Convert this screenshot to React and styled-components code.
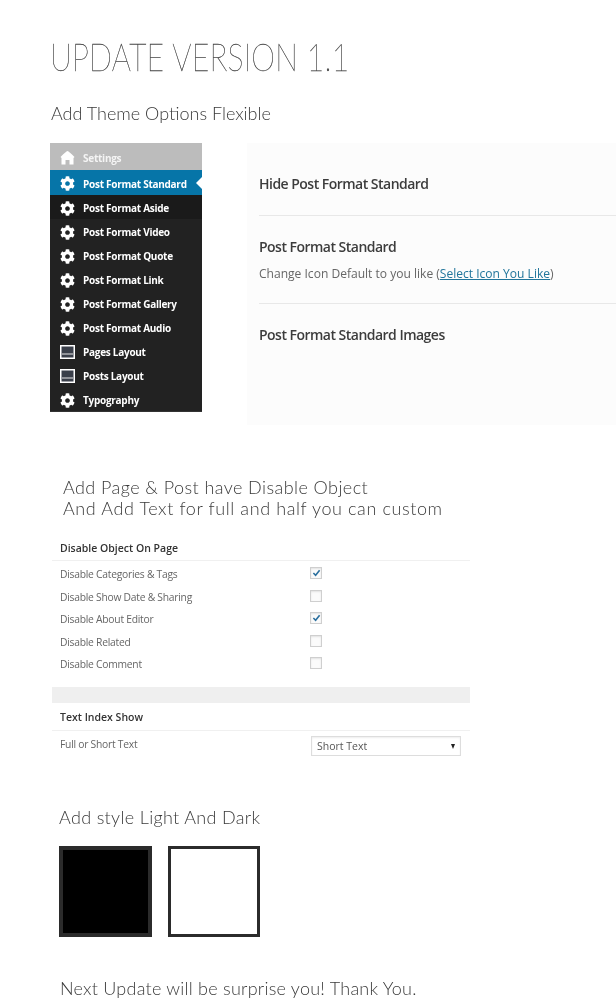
import React from "react";
import styled, { createGlobalStyle } from "styled-components";
import { FaCog } from "react-icons/fa";

const Global = createGlobalStyle`
  html, body { margin: 0; padding: 0; background: #fff; }
  body { width: 616px; overflow-x: hidden; }
`;

const Page = styled.div`
  width: 616px;
  height: 1000px;
  overflow: hidden;
  display: flex;
  flex-direction: column;
  font-family: "Open Sans", sans-serif;
`;

const Title = styled.h1`
  margin: 37px 0 0 50px;
  font: 100 37px/40px Lato, sans-serif;
  color: #444;
  letter-spacing: 0.3px;
  height: 40px;
  white-space: nowrap;
  -webkit-text-stroke: 0.3px #444;
  transform: scaleX(0.815);
  transform-origin: left center;
  filter: grayscale(1);
`;

const Lead = styled.p`
  margin: ${(p) => p.$top}px 0 0 ${(p) => p.$left}px;
  font: 300 18px/21px Lato, sans-serif;
  letter-spacing: ${(p) => p.$spacing ?? 0}px;
  color: #3a3a3a;
  white-space: nowrap;
  filter: grayscale(1);
`;

const TopRow = styled.section`
  display: flex;
  align-items: flex-start;
  gap: 45px;
  margin: 19px 0 0 50px;
`;

const Menu = styled.nav`
  width: 152px;
  height: 269px;
  background: #222;
  border-bottom: 1px solid #333;
  box-sizing: border-box;
  display: flex;
  flex-direction: column;
  flex: none;
  filter: blur(0.25px);
`;

const MenuHead = styled.div`
  height: 28px;
  background: #bcbcbc;
  display: flex;
  align-items: center;
  color: #f4f4f4;
  font-size: 10px;
  font-weight: 700;
  letter-spacing: -0.25px;
  padding-top: 2px;
  box-sizing: border-box;
`;

const MenuItem = styled.div`
  position: relative;
  height: ${(p) => (p.$active ? 25 : 24)}px;
  flex: none;
  display: flex;
  align-items: center;
  box-sizing: border-box;
  padding-top: 2px;
  color: #fff;
  font-size: 10px;
  font-weight: 700;
  letter-spacing: -0.27px;
  background: ${(p) => (p.$active ? "#0675a8" : p.$dim ? "#1a1a1a" : "transparent")};
  ${(p) =>
    p.$active &&
    `&::after {
      content: "";
      position: absolute;
      right: 0;
      top: 7px;
      border: 6px solid transparent;
      border-left: 0;
      border-right-color: #fff;
    }`}
`;

const IconSlot = styled.span`
  width: 33px;
  flex: none;
  display: flex;
  justify-content: center;
  padding-left: 1px;
  box-sizing: border-box;
  color: #fff;
  font-size: 15px;
`;

const Panel = styled.div`
  flex: 1;
  height: 282px;
  background: #fcfcfc;
  padding: 32px 0 0 12px;
  box-sizing: border-box;
  color: #444;
  filter: blur(0.3px);
`;

const PanelBlock = styled.div`
  border-bottom: ${(p) => (p.$last ? "0" : "1px solid #e8e8e8")};
  height: ${(p) => p.$height}px;
  box-sizing: border-box;
  padding-top: ${(p) => p.$pad}px;
`;

const PanelTitle = styled.div`
  font-size: 14px;
  line-height: 18px;
  font-weight: 600;
  letter-spacing: -0.52px;
  color: #3c3c3c;
`;

const PanelNote = styled.div`
  font-size: 12.05px;
  line-height: 17px;
  margin-top: 9px;
  color: #666;
  a { color: #21759b; text-decoration: underline; }
`;

const Options = styled.section`
  width: 418px;
  margin: 10px 0 0 52px;
  color: #555;
  filter: blur(0.25px);
`;

const OptionHead = styled.div`
  height: ${(p) => p.$height}px;
  border-bottom: 1px solid #f0f0f0;
  box-sizing: border-box;
  display: flex;
  align-items: center;
  padding: ${(p) => p.$pad ?? 0}px 0 0 8px;
  font-size: 10.5px;
  font-weight: 600;
  color: #333;
`;

const OptionList = styled.div`
  padding-top: 1px;
  height: 126px;
  box-sizing: border-box;
`;

const OptionRow = styled.div`
  height: 22.5px;
  display: flex;
  align-items: center;
  padding-left: 8px;
  font-size: 10.3px;
  letter-spacing: -0.25px;
  color: #666;
`;

const OptionLabel = styled.span`
  width: 250px;
  flex: none;
  position: relative;
  top: 1px;
`;

const Check = styled.span`
  width: 12px;
  height: 12px;
  box-sizing: border-box;
  border: 1px solid #cfcfcf;
  background: #fbfbfb;
  box-shadow: inset 0 1px 2px rgba(0, 0, 0, 0.1);
  display: flex;
  align-items: center;
  justify-content: center;
`;

const Band = styled.div`
  height: 16px;
  background: #efefef;
`;

const SelectRow = styled.div`
  display: flex;
  padding: 5px 9px 0 8px;
  justify-content: space-between;
  font-size: 10.3px;
  letter-spacing: -0.25px;
  color: #666;
`;

const SelectLabel = styled.span`
  padding-top: 1px;
`;

const SelectBox = styled.div`
  width: 150px;
  height: 20px;
  box-sizing: border-box;
  border: 1px solid #ddd;
  box-shadow: inset 0 1px 2px rgba(0, 0, 0, 0.07);
  display: flex;
  align-items: center;
  justify-content: space-between;
  padding: 0 5px;
  font-size: 10.5px;
  letter-spacing: 0;
  color: #555;
`;

const Caret = styled.span`
  width: 0;
  height: 0;
  border-left: 2.5px solid transparent;
  border-right: 2.5px solid transparent;
  border-top: 5px solid #222;
`;

const Swatches = styled.div`
  display: flex;
  gap: 16px;
  margin: 18px 0 0 59px;
`;

const Swatch = styled.div`
  width: ${(p) => p.$w}px;
  height: 91px;
  box-sizing: border-box;
  border: ${(p) => p.$border}px solid #2b2b2b;
  background: ${(p) => p.$bg};
`;

const Gear = () => (
  <IconSlot>
    <FaCog />
  </IconSlot>
);

const Home = () => (
  <IconSlot>
    <svg width="15" height="15" viewBox="0 0 15 15">
      <path d="M7.5 1 Q9 1.5 14.5 7 L13.5 8 V14.5 H9.5 V10 H5.5 V14.5 H1.5 V8 L0.5 7 Q6 1.5 7.5 1 Z" fill="#fff" />
    </svg>
  </IconSlot>
);

const LayoutIcon = () => (
  <IconSlot>
    <svg width="15" height="14" viewBox="0 0 15 14">
      <rect x="0.75" y="0.75" width="13.5" height="12.5" fill="#3a3f4a" stroke="#fff" strokeWidth="1.5" />
      <rect x="2" y="8.5" width="11" height="1" fill="#e8e8e8" />
    </svg>
  </IconSlot>
);

const Tick = () => (
  <svg width="9" height="8" viewBox="0 0 10 9">
    <path d="M1.5 4.5 L4 7 L8.5 1.5" fill="none" stroke="#2a6f9e" strokeWidth="1.8" />
  </svg>
);

const menu = [
  ["Post Format Standard", "gear", true],
  ["Post Format Aside", "gear", false, true],
  ["Post Format Video", "gear"],
  ["Post Format Quote", "gear"],
  ["Post Format Link", "gear"],
  ["Post Format Gallery", "gear"],
  ["Post Format Audio", "gear"],
  ["Pages Layout", "layout"],
  ["Posts Layout", "layout"],
  ["Typography", "gear"],
];

const options = [
  ["Disable Categories & Tags", true],
  ["Disable Show Date & Sharing", false],
  ["Disable About Editor", true],
  ["Disable Related", false],
  ["Disable Comment", false],
];

export default function App() {
  return (
    <Page>
      <Global />
      <Title>UPDATE VERSION 1.1</Title>
      <Lead $top={26} $left={51}>Add Theme Options Flexible</Lead>
      <TopRow>
        <Menu>
          <MenuHead>
            <Home />
            Settings
          </MenuHead>
          {menu.map(([label, icon, active, dim]) => (
            <MenuItem key={label} $active={active} $dim={dim}>
              {icon === "gear" ? <Gear /> : <LayoutIcon />}
              {label}
            </MenuItem>
          ))}
        </Menu>
        <Panel>
          <PanelBlock $height={41} $pad={0}>
            <PanelTitle>Hide Post Format Standard</PanelTitle>
          </PanelBlock>
          <PanelBlock $height={88} $pad={22}>
            <PanelTitle>Post Format Standard</PanelTitle>
            <PanelNote>
              Change Icon Default to you like (<a>Select Icon You Like</a>)
            </PanelNote>
          </PanelBlock>
          <PanelBlock $last $height={60} $pad={22}>
            <PanelTitle>Post Format Standard Images</PanelTitle>
          </PanelBlock>
        </Panel>
      </TopRow>
      <Lead $top={52} $left={63} $spacing={0.43}>Add Page &amp; Post have Disable Object</Lead>
      <Lead $top={0} $left={63} $spacing={0.6}>And Add Text for full and half you can custom</Lead>
      <Options>
        <OptionHead $height={32} $pad={6}>Disable Object On Page</OptionHead>
        <OptionList>
          {options.map(([label, on]) => (
            <OptionRow key={label}>
              <OptionLabel>{label}</OptionLabel>
              <Check>{on && <Tick />}</Check>
            </OptionRow>
          ))}
        </OptionList>
        <Band />
        <OptionHead $height={28}>Text Index Show</OptionHead>
        <SelectRow>
          <SelectLabel>Full or Short Text</SelectLabel>
          <SelectBox>
            Short Text
            <Caret />
          </SelectBox>
        </SelectRow>
      </Options>
      <Lead $top={51} $left={59} $spacing={0.33}>Add style Light And Dark</Lead>
      <Swatches>
        <Swatch $w={93} $border={4} $bg="#000" />
        <Swatch $w={92} $border={3} $bg="#fff" />
      </Swatches>
      <Lead $top={41} $left={60} $spacing={0.24}>Next Update will be surprise you! Thank You.</Lead>
    </Page>
  );
}
